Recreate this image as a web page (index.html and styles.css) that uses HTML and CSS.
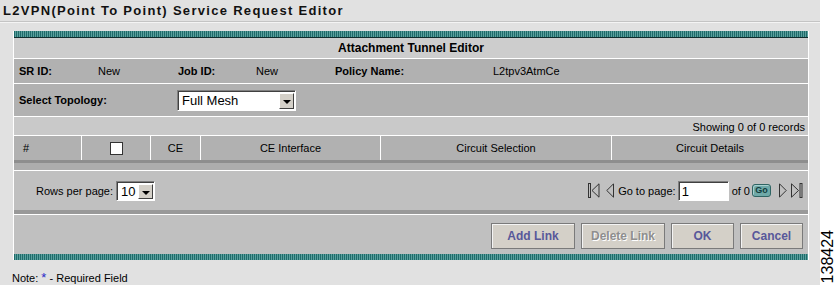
FILE: index.html
```html
<!DOCTYPE html>
<html lang="en">
<head>
    <meta charset="UTF-8">
    <title>L2VPN Service Request Editor</title>
    <link rel="stylesheet" href="styles.css">
</head>
<body>
    <div class="page">
        <div class="page-title">L2VPN(Point To Point) Service Request Editor</div>

        <div class="panel">
            <div class="stripe stripe-top"></div>
            <div class="panel-head">Attachment Tunnel Editor</div>

            <div class="info-row">
                <span class="label">SR ID:</span><span>New</span>
                <span class="label">Job ID:</span><span>New</span>
                <span class="label">Policy Name:</span><span>L2tpv3AtmCe</span>
            </div>

            <div class="topo-row">
                <span class="label">Select Topology:</span>
                <div class="combo combo-topo">
                    <span class="combo-value">Full Mesh</span>
                    <span class="combo-arrow"></span>
                </div>
            </div>

            <div class="records-row">Showing 0 of 0 records</div>

            <div class="grid-head">
                <div class="col col-num">#</div>
                <div class="col"><span class="checkbox"></span></div>
                <div class="col">CE</div>
                <div class="col">CE Interface</div>
                <div class="col">Circuit Selection</div>
                <div class="col">Circuit Details</div>
            </div>
            <div class="grid-foot"></div>

            <div class="pager">
                <div class="pager-rows">
                    <span>Rows per page:</span>
                    <div class="combo combo-rows">
                        <span class="combo-value">10</span>
                        <span class="combo-arrow"></span>
                    </div>
                </div>
                <div class="pager-nav">
                    <svg class="nav-icon first" width="12" height="15" viewBox="0 0 12 15">
                        <rect x="0.5" y="0.5" width="2" height="14"/>
                        <path d="M11 0.8 L4 7.5 L11 14.2 Z"/>
                    </svg>
                    <svg class="nav-icon prev" width="8" height="15" viewBox="0 0 8 15">
                        <path d="M7.5 0.8 L0.8 7.5 L7.5 14.2 Z"/>
                    </svg>
                    <span class="goto">Go to page:</span>
                    <span class="page-input">1</span>
                    <span class="of">of 0</span>
                    <span class="go-btn">Go</span>
                    <svg class="nav-icon next" width="8" height="15" viewBox="0 0 8 15">
                        <path d="M0.5 0.8 L7.2 7.5 L0.5 14.2 Z"/>
                    </svg>
                    <svg class="nav-icon last" width="12" height="15" viewBox="0 0 12 15">
                        <path d="M0.5 0.8 L7.5 7.5 L0.5 14.2 Z"/>
                        <rect x="9" y="0.5" width="2" height="14"/>
                    </svg>
                </div>
            </div>
            <div class="divider"></div>

            <div class="actions">
                <span class="btn btn-wide">Add Link</span>
                <span class="btn btn-wide btn-disabled">Delete Link</span>
                <span class="btn">OK</span>
                <span class="btn">Cancel</span>
            </div>
            <div class="stripe"></div>
        </div>

        <div class="note">Note: <span class="req">*</span> - Required Field</div>
    </div>

    <div class="fig-strip">
        <span class="fig-num">138424</span>
    </div>
</body>
</html>
```

FILE: styles.css
```css
body {
    margin: 0;
    display: flex;
    height: 285px;
    overflow: hidden;
    font-family: "Liberation Sans", Arial, sans-serif;
    font-size: 11px;
    color: #000;
    background: #fff;
}

.page {
    width: 820px;
    height: 285px;
    background: #e1e1e1;
}

.page-title {
    height: 21px;
    padding-left: 3px;
    line-height: 21px;
    font-size: 13px;
    font-weight: bold;
    letter-spacing: 1.3px;
    color: #111;
    border-bottom: 1px solid #c4c4c4;
    box-shadow: 0 1px 0 #f4f4f4;
}

.panel {
    margin: 9px 11px 0 13px;
    border-left: 1px solid #fff;
    border-right: 1px solid #fff;
}

.stripe {
    height: 6px;
    background: repeating-linear-gradient(90deg, #1f6b6a 0 1px, #5a9f9d 1px 2px);
}

.stripe-top {
    border-bottom: 1px solid #102c2c;
}

.panel-head {
    height: 20px;
    line-height: 20px;
    text-align: center;
    font-size: 12px;
    font-weight: bold;
    background: #cdcdcd;
    border-bottom: 1px solid #fff;
}

.label {
    font-weight: bold;
}

.info-row {
    display: grid;
    grid-template-columns: 79px 80px 78px 79px 158px 1fr;
    align-items: center;
    height: 24px;
    padding-left: 5px;
    background: #b1b1b1;
    border-bottom: 1px solid #fff;
}

.topo-row {
    display: grid;
    grid-template-columns: 158px auto;
    justify-content: start;
    align-items: center;
    height: 32px;
    padding-left: 5px;
    background: #b1b1b1;
    border-bottom: 1px solid #fff;
}

.records-row {
    height: 18px;
    line-height: 20px;
    padding-right: 3px;
    text-align: right;
    background: #c9c9c9;
    border-bottom: 1px solid #fff;
}

.grid-head {
    display: grid;
    grid-template-columns: 68px 69px 50px 180px 231px 1fr;
    height: 24px;
    background: #b1b1b1;
}

.col {
    display: flex;
    align-items: center;
    justify-content: center;
    border-right: 1px solid #fff;
}

.col:last-child {
    border-right: none;
}

.col-num {
    justify-content: flex-start;
    padding-left: 9px;
}

.checkbox {
    width: 11px;
    height: 11px;
    background: #fff;
    border: 1px solid #333;
}

.grid-foot {
    height: 7px;
    background: #adadad;
    border-top: 3px solid #8e8e8e;
    border-bottom: 1px solid #fff;
}

/* combo boxes (windows classic look) */
.combo {
    display: flex;
    background: #fff;
    border: 1px solid;
    border-color: #808080 #fff #fff #808080;
    box-shadow: inset 1px 1px 0 #404040;
}

.combo-value {
    flex: 1;
    padding: 1px 0 0 4px;
    font-size: 13px;
    line-height: 17px;
}

.combo-arrow {
    position: relative;
    width: 15px;
    margin: 2px 1px 1px 0;
    background: #d4d0c8;
    border: 1px solid;
    border-color: #fff #404040 #404040 #fff;
    box-sizing: border-box;
}

.combo-arrow::after {
    content: "";
    position: absolute;
    left: 3px;
    top: 6px;
    border-left: 4px solid transparent;
    border-right: 4px solid transparent;
    border-top: 4px solid #000;
}

.combo-topo {
    width: 117px;
    height: 19px;
}

.combo-rows {
    width: 37px;
    height: 18px;
}

.pager {
    display: flex;
    justify-content: space-between;
    align-items: center;
    height: 39px;
    padding: 0 5px 0 22px;
    background: #c0c0c0;
}

.pager-rows {
    display: flex;
    align-items: center;
    gap: 3px;
    font-size: 11px;
}

.pager-nav {
    display: flex;
    align-items: center;
}

.nav-icon {
    fill: none;
    stroke: #333;
    stroke-width: 1;
}

.nav-icon.prev {
    margin-left: 6px;
}

.nav-icon.last {
    margin-left: 4px;
}

.goto {
    margin-left: 4px;
}

.page-input {
    width: 46px;
    height: 18px;
    margin-left: 2px;
    padding-left: 3px;
    font-size: 13px;
    line-height: 19px;
    background: #fff;
    border: 1px solid;
    border-color: #808080 #fff #fff #808080;
    box-shadow: inset 1px 1px 0 #404040;
}

.of {
    margin-left: 3px;
}

.go-btn {
    width: 17px;
    height: 11px;
    margin: 0 8px 0 2px;
    font-size: 9px;
    font-weight: bold;
    line-height: 11px;
    text-align: center;
    color: #123c3c;
    background: #6fa9a8;
    border: 1px solid #2f6463;
    border-radius: 3px;
    box-shadow: inset 1px 1px 0 #a8d0cf;
}

.divider {
    height: 4px;
    background: #999;
    border-bottom: 1px solid #fff;
}

.actions {
    display: flex;
    justify-content: flex-end;
    gap: 6px;
    height: 39px;
    padding: 8px 5px 0 0;
    box-sizing: border-box;
    background: #c0c0c0;
}

.btn {
    width: 61px;
    height: 24px;
    line-height: 24px;
    text-align: center;
    font-size: 12px;
    font-weight: bold;
    color: #58589a;
    background: #d4d0c8;
    border: 1px solid #7a7a7a;
    box-shadow: inset 1px 1px 0 #f4f4f4;
}

.btn-wide {
    width: 82px;
}

.btn-disabled {
    color: #8e8e8e;
    text-shadow: 1px 1px 0 #fff;
}

.note {
    margin: 12px 0 0 12px;
    font-size: 11px;
}

.req {
    font-size: 13px;
    line-height: 11px;
    color: #2a2ac8;
}

.fig-strip {
    flex: 1;
    display: flex;
    align-items: flex-end;
    justify-content: center;
    padding-bottom: 2px;
}

.fig-num {
    writing-mode: vertical-rl;
    transform: rotate(180deg);
    font-size: 16px;
    line-height: 15px;
}
```
